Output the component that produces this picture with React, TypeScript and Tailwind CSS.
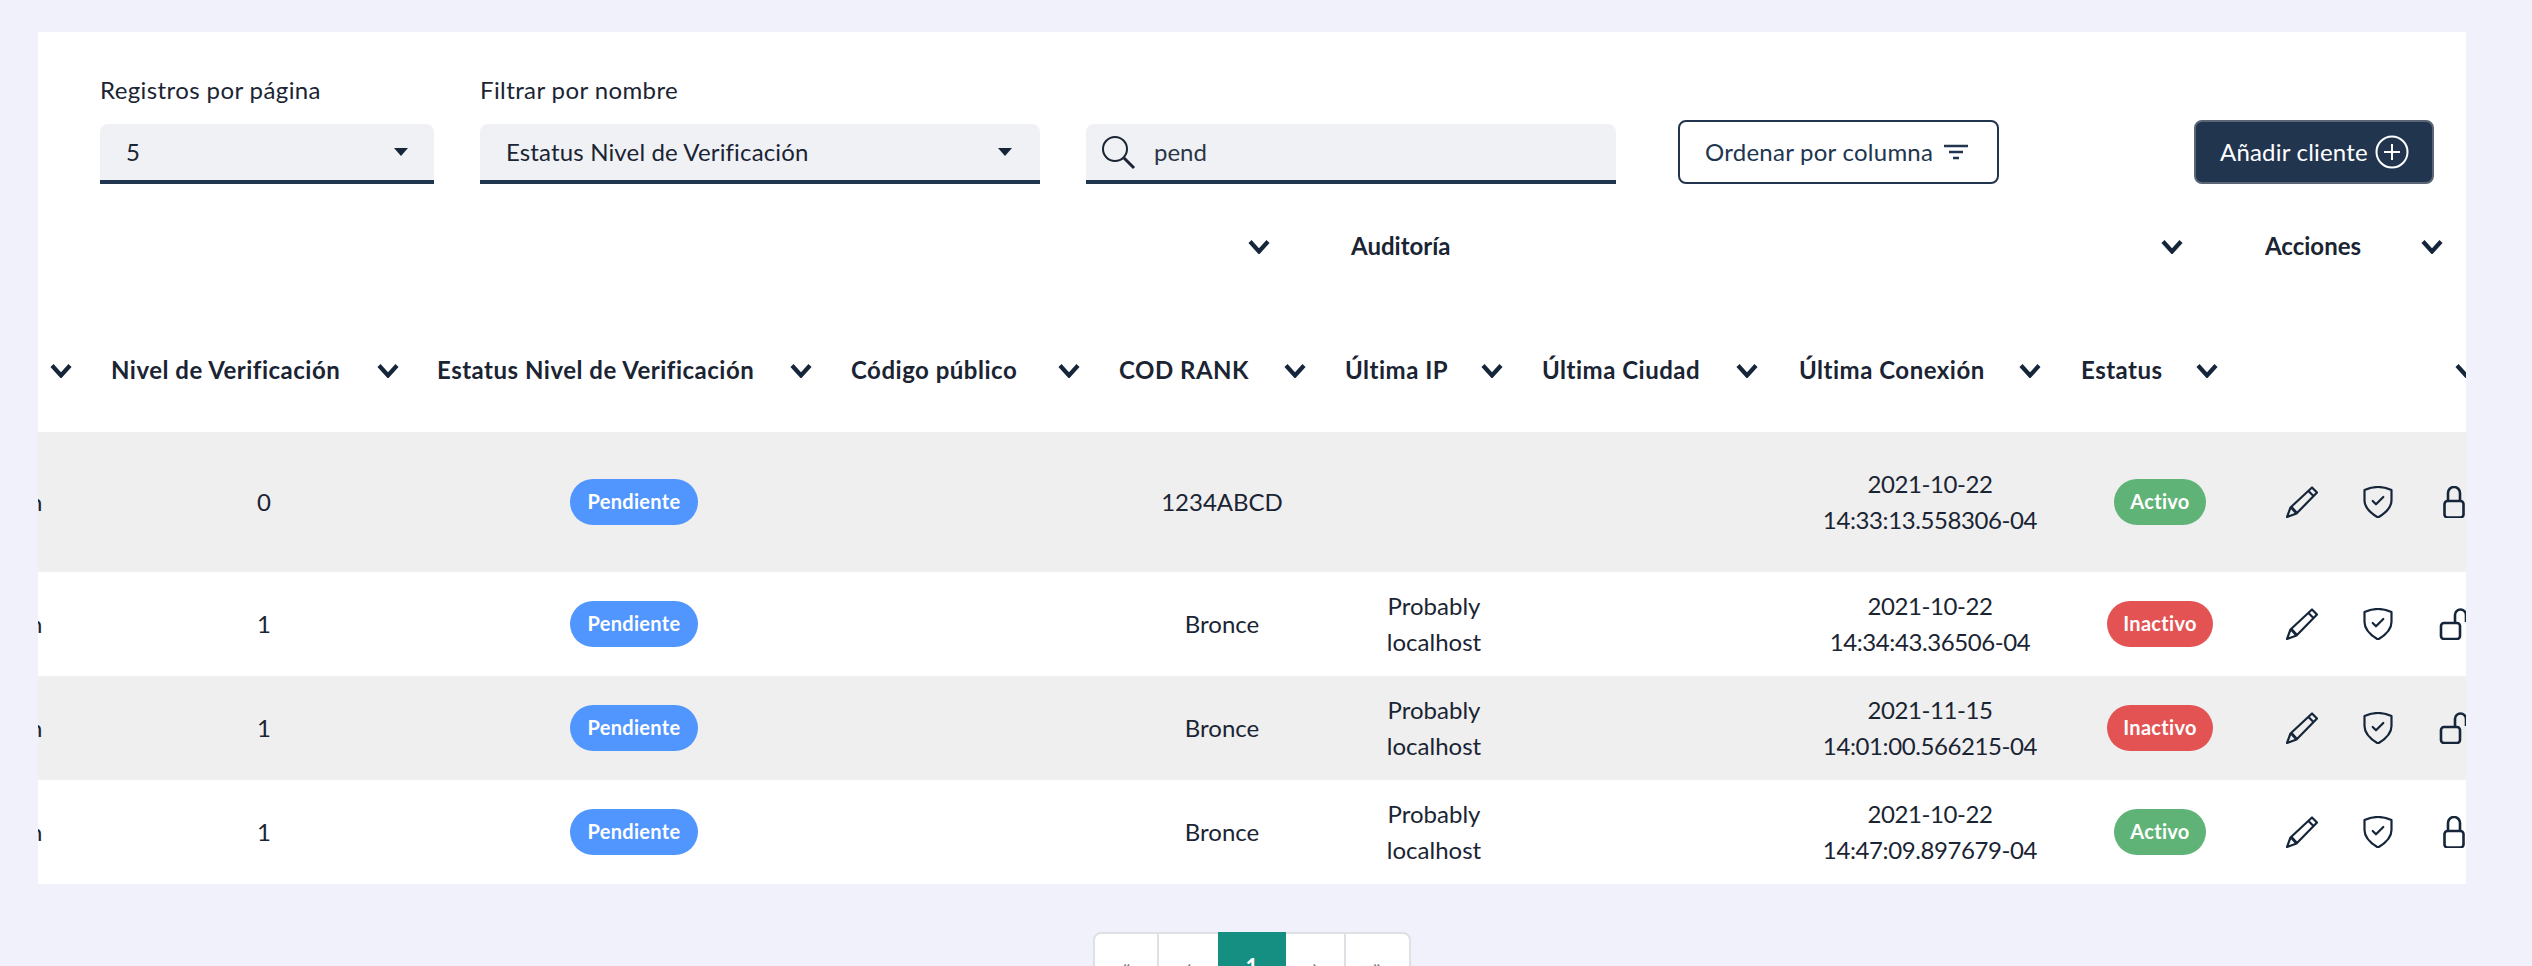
import { ReactNode } from 'react'

const font = 'font-["Lato","Liberation_Sans",sans-serif]'

// same column template for the header row and the body rows
const cols = 'grid grid-cols-[62px_328px_412px_260px_244px_180px_256px_300px_160px_226px]'

const headers = [
  { label: 'Nivel de Verificación', cell: 'pl-[11px] gap-[36px]', text: 'w-[230px]' },
  { label: 'Estatus Nivel de Verificación', cell: 'pl-[9px] gap-[34px]', text: 'w-[319px]' },
  { label: 'Código público', cell: 'pl-[11px] gap-[34px]', text: 'w-[173px]' },
  { label: 'COD RANK', cell: 'pl-[19px] gap-[34px]', text: 'w-[131px]' },
  { label: 'Última IP', cell: 'pl-[1px] gap-[34px]', text: 'w-[102px]' },
  { label: 'Última Ciudad', cell: 'pl-[18px] gap-[34px]', text: 'w-[160px]' },
  { label: 'Última Conexión', cell: 'pl-[19px] gap-[34px]', text: 'w-[186px]' },
  { label: 'Estatus', cell: 'pl-[1px] gap-[34px]', text: 'w-[81px]' },
]

const rows = [
  { nivel: '0', rank: '1234ABCD', ip: false, date: '2021-10-22', time: '14:33:13.558306-04', active: true, tall: true, bg: 'bg-[#efefef]' },
  { nivel: '1', rank: 'Bronce', ip: true, date: '2021-10-22', time: '14:34:43.36506-04', active: false, tall: false, bg: 'bg-white' },
  { nivel: '1', rank: 'Bronce', ip: true, date: '2021-11-15', time: '14:01:00.566215-04', active: false, tall: false, bg: 'bg-[#efefef]' },
  { nivel: '1', rank: 'Bronce', ip: true, date: '2021-10-22', time: '14:47:09.897679-04', active: true, tall: false, bg: 'bg-white' },
]

function Chevron() {
  return (
    <svg width="22" height="14" viewBox="0 0 22 14" fill="none" className="shrink-0 text-[#16263a]">
      <path d="M2 1.5 L11 11.5 L20 1.5" stroke="currentColor" strokeWidth="4.2" />
    </svg>
  )
}

function Caret() {
  return (
    <svg width="14" height="8" viewBox="0 0 14 8" className="text-[#16263a]">
      <path d="M0 0 H14 L7 8 Z" fill="currentColor" />
    </svg>
  )
}

function PencilIcon() {
  return (
    <svg width="32" height="32" viewBox="0 0 32 32" fill="none" stroke="currentColor" strokeWidth="2.2" strokeLinejoin="round" className="shrink-0">
      <path d="M1 31 L4.5 21.5 L26 1.5 L31 6.5 L10.5 27.5 Z" />
      <path d="M22.5 5 L27.5 10" />
      <path d="M5 21 L10.5 27" strokeWidth="3" />
    </svg>
  )
}

function ShieldIcon() {
  return (
    <svg width="32" height="32" viewBox="0 0 32 32" fill="none" stroke="currentColor" strokeWidth="2.2" strokeLinejoin="round" className="shrink-0">
      <path d="M16 1 C20 1 25 2 29.5 4 V14 C29.5 22 22 28 16 31.5 C10 28 2.5 22 2.5 14 V4 C7 2 12 1 16 1 Z" />
      <path d="M10.7 15 L14 18.3 L21.3 11" strokeLinecap="round" />
    </svg>
  )
}

function LockIcon({ open }: { open: boolean }) {
  if (open) {
    return (
      <svg width="32" height="32" viewBox="0 0 32 32" fill="none" stroke="currentColor" strokeWidth="2.6" className="shrink-0">
        <rect x="3" y="15" width="19" height="16" rx="3" />
        <path d="M17 15 V7 a5.5 5.5 0 0 1 11 0 V14" />
      </svg>
    )
  }
  return (
    <svg width="32" height="32" viewBox="0 0 32 32" fill="none" stroke="currentColor" strokeWidth="2.6" className="shrink-0">
      <rect x="6.5" y="15" width="19" height="16.5" rx="3" />
      <path d="M10 15 V7 a6 6 0 0 1 12 0 V15" />
    </svg>
  )
}

function Field({ label, className, children }: { label?: string; className: string; children: ReactNode }) {
  return (
    <div className={className}>
      {label && <div className="h-[28px] mb-[20px] text-[24px] leading-[28px] tracking-[0.4px]">{label}</div>}
      <div className="h-[60px] flex items-center rounded-t-lg bg-[#f0f1f5] border-b-4 border-[#21354f]">{children}</div>
    </div>
  )
}

export default function App() {
  return (
    <div className={`h-[966px] overflow-hidden bg-[#f1f1fb] pt-[32px] pl-[38px] pr-[66px] text-[#1a2433] ${font}`}>
      <div className="h-[852px] bg-white overflow-hidden">
        {/* Filters */}
        <div className="flex items-end pt-[44px] pl-[62px]">
          <Field label="Registros por página" className="w-[334px]">
            <span className="pl-[26px] text-[24px]">5</span>
            <span className="ml-auto mr-[26px] flex"><Caret /></span>
          </Field>
          <Field label="Filtrar por nombre" className="w-[560px] ml-[46px]">
            <span className="pl-[26px] text-[24px] tracking-[0.15px]">Estatus Nivel de Verificación</span>
            <span className="ml-auto mr-[28px] flex"><Caret /></span>
          </Field>
          <Field className="w-[530px] ml-[46px]">
            <svg width="36" height="36" viewBox="0 0 36 36" fill="none" stroke="currentColor" strokeWidth="2" className="ml-[14px]">
              <circle cx="15" cy="15" r="12" />
              <path d="M24 24 L34 34" strokeWidth="3" />
            </svg>
            <span className="ml-[18px] text-[24px] text-[#2b3646]">pend</span>
          </Field>
          <button className="w-[321px] h-[64px] ml-[62px] flex items-center pl-[25px] rounded-lg border-2 border-[#21354f] text-[24px] tracking-[0.25px] text-[#21354f]">
            Ordenar por columna
            <svg width="26" height="16" viewBox="0 0 26 16" fill="none" stroke="currentColor" strokeWidth="2.5" className="ml-[10px]">
              <path d="M1 2 H25 M6 8 H20 M10 14 H16" />
            </svg>
          </button>
          <button className="w-[240px] h-[64px] ml-[195px] flex items-center pl-[24px] rounded-lg border-2 border-[#5a6675] bg-[#21354f] text-[24px] tracking-[0.2px] text-white">
            Añadir cliente
            <svg width="34" height="34" viewBox="0 0 34 34" fill="none" stroke="currentColor" strokeWidth="2" className="ml-[7px]">
              <circle cx="17" cy="17" r="15.5" />
              <path d="M17 9 V25 M9 17 H25" />
            </svg>
          </button>
        </div>

        {/* Group headers */}
        <div className="flex items-center h-[126px] pl-[1210px] text-[24px] font-bold">
          <Chevron />
          <span className="w-[105px] ml-[81px] pb-[3px] whitespace-nowrap">Auditoría</span>
          <span className="ml-[705px]"><Chevron /></span>
          <span className="w-[100px] ml-[82px] pb-[3px] whitespace-nowrap">Acciones</span>
          <span className="ml-[56px]"><Chevron /></span>
        </div>

        {/* Column headers */}
        <div className={`${cols} h-[122px] items-center text-[24px] font-bold`}>
          <div className="pl-[12px]"><Chevron /></div>
          {headers.map((h) => (
            <div key={h.label} className={`flex items-center ${h.cell}`}>
              <span className={`${h.text} pb-[2px] whitespace-nowrap tracking-[0.5px]`}>{h.label}</span>
              <Chevron />
            </div>
          ))}
          <div className="pl-[215px] overflow-hidden"><Chevron /></div>
        </div>

        {/* Body */}
        {rows.map((r, i) => (
          <div key={i} className={`${cols} ${r.tall ? 'h-[140px]' : 'h-[104px]'} ${r.bg} items-center text-[24px] leading-[36px] text-center`}>
            <div className="overflow-hidden text-left"><span className="block -ml-[9px]">n</span></div>
            <div>{r.nivel}</div>
            <div className="flex justify-center">
              <span className="w-[128px] h-[46px] flex items-center justify-center pb-[2px] rounded-full bg-[#5196ff] text-white text-[20px] font-bold tracking-[0.3px]">Pendiente</span>
            </div>
            <div />
            <div>{r.rank}</div>
            <div>
              {r.ip && (<>Probably<br />localhost</>)}
            </div>
            <div />
            <div className="tracking-[-0.4px]">{r.date}<br />{r.time}</div>
            <div className="flex justify-center">
              {r.active ? (
                <span className="w-[92px] h-[46px] flex items-center justify-center pb-[2px] rounded-full bg-[#5fb377] text-white text-[20px] font-bold tracking-[0.3px]">Activo</span>
              ) : (
                <span className="w-[106px] h-[46px] flex items-center justify-center pb-[2px] rounded-full bg-[#e35353] text-white text-[20px] font-bold tracking-[0.3px]">Inactivo</span>
              )}
            </div>
            <div className="flex items-center gap-[44px] pl-[46px] text-[#16263a] overflow-hidden">
              <PencilIcon />
              <ShieldIcon />
              <LockIcon open={!r.active} />
            </div>
          </div>
        ))}
      </div>

      {/* Pagination, cut off by the window */}
      <div className="mt-[48px] flex justify-center">
        <div className="flex h-[70px] rounded-lg bg-white border-2 border-[#dde1e6] text-[22px] text-[#6c757d] text-center">
          <span className="w-[64px] border-r-2 border-[#dde1e6] pt-[15px]">«</span>
          <span className="w-[59px] pt-[15px]">‹</span>
          <span className="w-[68px] -mt-[2px] bg-[#148f82] text-white font-bold pt-[18px]">1</span>
          <span className="w-[60px] border-r-2 border-[#dde1e6] pt-[15px]">›</span>
          <span className="w-[63px] pt-[15px]">»</span>
        </div>
      </div>
    </div>
  )
}
